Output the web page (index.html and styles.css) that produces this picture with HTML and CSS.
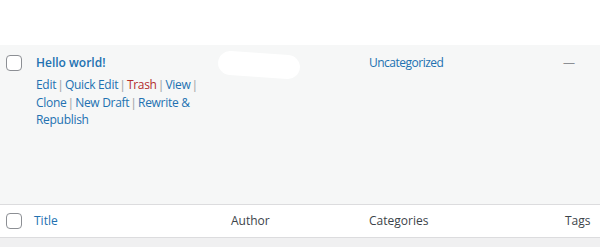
FILE: index.html
```html
<!DOCTYPE html>
<html>
<head>
<meta charset="utf-8">
<link rel="stylesheet" href="styles.css">
</head>
<body>
<div class="page">
  <div class="top"></div>
  <div class="row post">
    <div class="cell cb"><span class="box"></span></div>
    <div class="cell title">
      <a class="post-title">Hello world!</a>
      <div class="actions">
        <a>Edit</a> <span class="sep">|</span> <a>Quick&nbsp;Edit</a> <span class="sep">|</span> <a class="trash">Trash</a> <span class="sep">|</span> <a>View</a> <span class="sep">|</span> <a>Clone</a> <span class="sep">|</span> <a>New&nbsp;Draft</a> <span class="sep">|</span> <a>Rewrite&nbsp;&amp;</a> <a>Republish</a>
      </div>
    </div>
    <div class="cell author"><span class="blot"></span></div>
    <div class="cell cats"><a>Uncategorized</a></div>
    <div class="cell tags"><span class="dash">—</span></div>
  </div>
  <div class="row foot">
    <div class="cell cb"><span class="box"></span></div>
    <div class="cell title"><a class="hlink">Title</a></div>
    <div class="cell author">Author</div>
    <div class="cell cats">Categories</div>
    <div class="cell tags">Tags</div>
  </div>
  <div class="rest"></div>
</div>
</body>
</html>
```

FILE: styles.css
```css
html, body {
  margin: 0;
  padding: 0;
  background: #f0f0f1;
}
body {
  font-family: "Open Sans", "Noto Sans", sans-serif;
  font-size: 12px;
  color: #3c434a;
}
.page {
  width: 600px;
  height: 247px;
  overflow: hidden;
}
.top {
  height: 45px;
  background: #fff;
}
.row {
  display: grid;
  grid-template-columns: 28px 195px 138px 196px 1fr;
}
.post {
  background: #f6f7f7;
  height: 159px;
  border-bottom: 1px solid #dcdcde;
}
.foot {
  background: #fff;
  height: 32px;
  border-bottom: 1px solid #dcdcde;
  align-items: center;
}
.cell {
  padding: 0 8px;
  min-width: 0;
}
.cb {
  padding: 0 0 0 6px;
}
.box {
  display: block;
  width: 14px;
  height: 14px;
  border: 1px solid #8c8f94;
  border-radius: 4px;
  background: #fff;
}
.post .cb .box {
  margin-top: 10px;
}
.post .cell {
  padding-top: 9px;
}
.post .cb { padding-top: 0; }
a {
  color: #2271b1;
  text-decoration: none;
}
.post-title {
  font-weight: 600;
  font-size: 12px;
  line-height: 18px;
  display: block;
}
.actions {
  margin-top: 4px;
  font-size: 12px;
  line-height: 17.5px;
  color: #a7aaad;
  width: 164px;
  letter-spacing: -0.3px;
}
.actions .trash {
  color: #b32d2e;
}
.sep {
  display: inline-block;
  color: #a7aaad;
  font-family: "Liberation Sans", sans-serif;
  letter-spacing: 0;
  line-height: 14px;
}
.author {
  position: relative;
}
.blot {
  position: absolute;
  left: -5px;
  top: 8px;
  width: 82px;
  height: 24px;
  background: #fff;
  border-radius: 14px;
  transform: rotate(4deg);
}
.cats a {
  font-size: 12px;
  line-height: 18px;
  letter-spacing: -0.5px;
}
.dash {
  display: inline-block;
  margin-left: -2px;
  color: #8c8f94;
  line-height: 18px;
}
.foot .cell {
  font-size: 12px;
  line-height: 18px;
}
.foot .title {
  padding-left: 6px;
}
.hlink {
  color: #2271b1;
}
```
